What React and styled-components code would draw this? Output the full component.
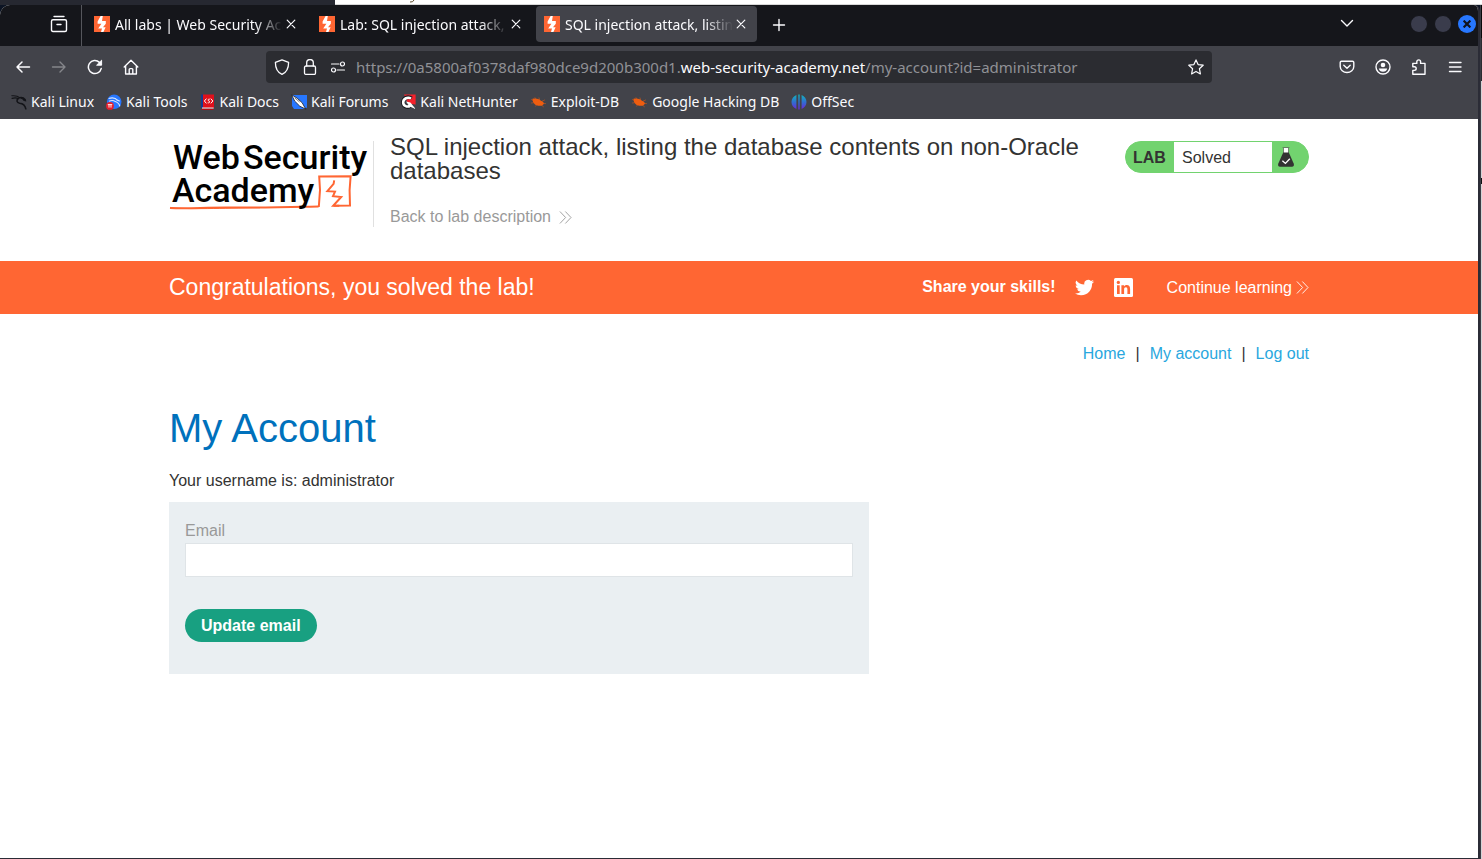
import React from "react";
import styled, { createGlobalStyle, css } from "styled-components";

const GlobalStyle = createGlobalStyle`
  *, *::before, *::after { box-sizing: border-box; }
  html, body, #root { margin: 0; min-height: 100vh; }
  body { background: #2b2c36; color: #333332; font-family: "Liberation Sans", Arial, sans-serif; font-size: 16px; }
  button, input { font: inherit; }
  a { text-decoration: none; }
  h1, h2, p { margin: 0; font-weight: 400; }
`;

/* ---------- desktop behind the browser window ---------- */

const Desktop = styled.div`
  min-height: 100vh;
  display: flex;
  flex-direction: column;
  background: #0c1424;
`;

const BackStrip = styled.div`
  display: flex;
  height: 5px;
  flex: none;
  background: #262831;
`;

const BackPage = styled.div`
  flex: 1;
  margin-left: 335px;
  background: #ffffff;
  border-bottom: 1px solid #d8d8d8;
  padding-left: 74px;
  svg { display: block; }
`;

const DesktopRow = styled.div`
  flex: 1;
  display: flex;
`;

const Frame = styled.div`
  flex: 1;
  min-width: 0;
  display: flex;
  flex-direction: column;
  border-right: 2px solid #2b2c36;
  border-bottom: 1px solid #2b2c36;
  border-radius: 10px 6px 0 0;
  background: #ffffff;
  overflow: hidden;
`;

const BackEdge = styled.div`
  width: 2px;
  flex: none;
  border-left: 1px solid #3b3c44;
  background: linear-gradient(#0a0a0a 33px, #2c2c30 33px, #2c2c30 76px, #d4d4d6 76px, #d4d4d6 173px, #111 173px, #111 179px, #d4d4d6 179px);
`;

/* ---------- browser chrome ---------- */

const Chrome = styled.div`
  font-family: "Noto Sans", sans-serif;
  color: #fbfbfe;
`;

const TabBar = styled.div`
  display: flex;
  align-items: stretch;
  height: 41px;
  background: #15161b;
`;

const Overview = styled.div`
  width: 82px;
  padding: 9px 12px 0 0;
  display: flex;
  justify-content: flex-end;
  align-items: flex-start;
  border-right: 1px solid #55565c;
  margin-right: 2px;
`;

const TabItem = styled.div`
  width: 221px;
  height: 36px;
  margin: 1px 2px 0;
  padding: 0 8px;
  display: flex;
  align-items: center;
  border-radius: 4px;
  background: ${(p) => (p.$active ? "#42434a" : "transparent")};
`;

const TabTitle = styled.span`
  flex: 1;
  min-width: 0;
  margin-left: 5px;
  overflow: hidden;
  white-space: nowrap;
  font-size: 14px;
  line-height: 20px;
  padding-top: 2px;
  mask-image: linear-gradient(to left, transparent, black 28px);
`;

const IconButton = styled.button`
  display: flex;
  align-items: center;
  justify-content: center;
  flex: none;
  width: ${(p) => p.$size || 36}px;
  height: ${(p) => p.$size || 36}px;
  padding: 0;
  border: 0;
  background: none;
  color: ${(p) => (p.$dim ? "#85868b" : "#fbfbfe")};
`;

const Spacer = styled.div`
  flex: 1;
`;

const WindowControls = styled.div`
  display: flex;
  align-items: center;
  gap: 6px;
  margin: 0 2px 3px 45px;
`;

const WindowButton = styled.button`
  display: flex;
  align-items: center;
  justify-content: center;
  width: 18px;
  height: 18px;
  padding: 0;
  border: 0;
  border-radius: 50%;
  background: ${(p) => (p.$close ? "#2777ff" : "#3a3c4c")};
  ${(p) =>
    !p.$close &&
    css`
      border: 1px solid #15161b;
    `}
`;

const NavBar = styled.div`
  display: grid;
  grid-template-columns: minmax(0, 1fr) 64% minmax(0, 1fr);
  align-items: center;
  height: 42px;
  padding: 0;
  background: #42434a;
`;

const NavGroup = styled.div`
  display: flex;
  align-items: center;
  padding: 0 5px;
  justify-content: ${(p) => (p.$end ? "flex-end" : "flex-start")};
`;

const UrlBox = styled.div`
  display: flex;
  align-items: center;
  height: 32px;
  padding: 0 2px;
  border-radius: 4px;
  background: #2b2c31;
`;

const Url = styled.span`
  flex: 1;
  min-width: 0;
  margin-left: 4px;
  overflow: hidden;
  white-space: nowrap;
  font-size: 15px;
  line-height: 24px;
  color: #909196;
  b { font-weight: 400; color: #fbfbfe; }
`;

const Bookmarks = styled.div`
  display: flex;
  align-items: flex-start;
  gap: 12px;
  height: 31px;
  padding: 4px 11px 0;
  background: #42434a;
`;

const Bookmark = styled.a`
  display: flex;
  align-items: center;
  gap: 4px;
  color: #fbfbfe;
  font-size: 14px;
  line-height: 20px;
  white-space: nowrap;
`;

/* ---------- lab page ---------- */

const Container = styled.div`
  width: 100%;
  max-width: 1140px;
  margin: 0 auto;
`;

const LabHeader = styled(Container)`
  display: flex;
  align-items: flex-start;
  gap: 16px;
  min-height: 142px;
  padding-top: 16px;
`;

const LogoLink = styled.a`
  flex: none;
  width: 205px;
  height: 86px;
  margin-top: 6px;
  border-right: 1px solid #e0e0e0;
  svg { display: block; }
`;

const TitleBlock = styled.div`
  flex: 1;
  min-width: 0;
`;

const LabTitle = styled.h2`
  font-size: 24px;
  line-height: 24px;
`;

const BackLink = styled.a`
  display: flex;
  align-items: center;
  gap: 8px;
  margin-top: 22px;
  color: #999999;
  line-height: 24px;
`;

const Status = styled.div`
  display: flex;
  flex: none;
  width: 184px;
  height: 32px;
  margin-top: 6px;
  border: 1px solid #72d36f;
  border-radius: 16px;
  background: #72d36f;
  overflow: hidden;
  line-height: 32px;
`;

const StatusTag = styled.span`
  width: 48px;
  padding-left: 7px;
  font-weight: 700;
`;

const StatusText = styled.span`
  flex: 1;
  padding-left: 8px;
  background: #ffffff;
`;

const StatusIcon = styled.span`
  width: 36px;
  padding: 4px 5px;
  svg { display: block; }
`;

const Banner = styled.section`
  background: #ff6633;
  color: #ffffff;
`;

const BannerRow = styled(Container)`
  display: flex;
  align-items: center;
  height: 53px;
`;

const BannerText = styled.p`
  flex: 1;
  padding-bottom: 2px;
  font-size: 23px;
  line-height: 28px;
`;

const ShareLabel = styled.strong`
  margin-right: 19px;
  padding-bottom: 2px;
`;

const ShareLink = styled.a`
  display: flex;
  margin-right: 20px;
`;

const ContinueLink = styled.a`
  display: flex;
  align-items: center;
  gap: 4px;
  margin-left: 14px;
  color: #ffffff;
`;

const TopLinks = styled.nav`
  display: flex;
  justify-content: flex-end;
  gap: 10px;
  padding-top: 28px;
  line-height: 24px;
  a { color: #29a7de; }
`;

const PageTitle = styled.h1`
  margin-top: 38px;
  color: #0071bc;
  font-size: 40px;
  line-height: 48px;
`;

const Username = styled.p`
  margin-top: 17px;
  line-height: 24px;
`;

const EmailForm = styled.form`
  max-width: 700px;
  margin-top: 9px;
  padding: 16px 16px 32px;
  background: #eaeff2;
`;

const FieldLabel = styled.label`
  display: block;
  color: #999999;
  line-height: 25px;
`;

const TextField = styled.input`
  display: block;
  width: 100%;
  height: 34px;
  padding: 0 8px;
  border: 1px solid #dfe4e7;
  border-radius: 0;
  background: #ffffff;
  outline: 0;
`;

const SubmitButton = styled.button`
  display: block;
  height: 33px;
  margin-top: 32px;
  padding: 0 16px;
  border: 0;
  border-radius: 17px;
  background: #18a081;
  color: #ffffff;
  font-weight: 700;
`;

/* ---------- drawings ---------- */

const Icon = ({ size = 18, sw = 1.4, children }) => (
  <svg width={size} height={size} viewBox={`0 0 ${size} ${size}`} fill="none" stroke="currentColor" strokeWidth={sw} strokeLinecap="round" strokeLinejoin="round" aria-hidden="true">
    {children}
  </svg>
);

const Favicon = () => (
  <svg width="16" height="16" viewBox="0 0 16 16" aria-hidden="true">
    <path fill="#ff6633" d="M0 0h16v16H0z" />
    <path fill="#fff" d="M6.6 0h2.2L8 5h3.8v2.800L9 11.200h2.600L9.400 16H7l1-3.600H4.200l3.200-4.600H3.600V5.400z" />
  </svg>
);

const CloseIcon = () => (
  <Icon size={16} sw={1.2}><path d="M4.2 4.2l7.6 7.6M11.8 4.2l-7.6 7.6" /></Icon>
);

const Chevrons = () => (
  <Icon size={13} sw={0.9}><path d="M1.2.8L6.6 6.5 1.2 12.2M6.6.8L12 6.5 6.6 12.2" /></Icon>
);

const DragonIcon = () => (
  <svg width="16" height="16" viewBox="0 0 16 16" fill="none" stroke="#131418" strokeLinecap="round" aria-hidden="true">
    <path strokeWidth="1.1" d="M.8 1.800c3.600-.4 6 .2 8 1.800M1 4.400c2.600-.8 4.600-.6 6.400.2" />
    <path strokeWidth="1.600" d="M8.600 3.800c2.600-.6 4.200.2 5.600 2M7.400 4.400c-2.400 2-1.600 4.400 1.200 4.800 3 .2 5.400 1.400 6.200 5.600" />
    <path strokeWidth="1" d="M10.500 4.500l4.600 2.400-2.400-.4" />
  </svg>
);

const ToolsIcon = () => (
  <svg width="16" height="16" viewBox="0 0 16 16" aria-hidden="true">
    <circle cx="8.200" cy="7.800" r="7.300" fill="#2777ff" />
    <path d="M2.600 4.600c4-1.400 7.400-.2 9 2M3 7.200c3-1.200 5-.6 6.400.4 2.400 1 4 2.400 4.400 4.800M9.800 5.200l4 2" fill="none" stroke="#d7e6ff" strokeWidth="1.100" />
    <circle cx="4" cy="11.900" r="3.900" fill="#e5202e" />
    <path d="M1.800 10.600h4.400M3 10.600v3M5 10.600v3" stroke="#fff" strokeWidth=".9" />
  </svg>
);

const DocsIcon = () => (
  <svg width="16" height="16" viewBox="0 0 16 16" aria-hidden="true">
    <path fill="#173a8f" d="M1 .500h2V14H1z" />
    <path fill="#e0101b" d="M3 .500h11V14H3z" />
    <path fill="#e9e9ee" d="M2 13.600h11.600v1.200H2z" />
    <path fill="#b00c14" d="M1.600 14.800h12V16h-12z" />
    <path d="M6.400 4.600L4.400 7l2 2.400M10.800 4.600L12.800 7l-2 2.400M9.800 5.200c-2-.4-2.200 1.400-.9 1.800s1 2.200-1.200 1.800" fill="none" stroke="#fff" strokeWidth="1" />
  </svg>
);

const ForumsIcon = () => (
  <svg width="16" height="16" viewBox="0 0 16 16" aria-hidden="true">
    <path fill="#2777ff" d="M1 1h15v12.500L13.500 15H3l-2-3z" />
    <path fill="#fff" stroke="#1a1b20" strokeWidth=".8" d="M.6.8l5.600 3.400 5 4.600 3.600 6.400-6-3L3.600 7z" />
    <path d="M3.600 3.800l5 4.200" stroke="#1a1b20" strokeWidth=".6" />
  </svg>
);

const NetHunterIcon = () => (
  <svg width="16" height="16" viewBox="0 0 16 16" aria-hidden="true">
    <path fill="#f3222c" d="M4 .600h11.600v10L8 9.400z" />
    <path fill="none" stroke="#1a1b20" strokeWidth="4" d="M11.600 4.400C7.600 1.800 3.200 4 3 8.200c0 4.200 4.600 6 7.400 3.600" />
    <path fill="none" stroke="#fff" strokeWidth="2.600" d="M11 4.600C7.600 2.600 3.400 4.600 3.200 8.200c0 4 4.400 5.400 7 3.400" />
    <path fill="#fff" d="M6 7.400l4.400 1L15.600 15l-6-2.600z" />
    <path fill="#f3222c" d="M7.400 5.400h5l3 5-4.400-2.400z" />
  </svg>
);

const BugIcon = () => (
  <svg width="17" height="16" viewBox="0 0 17 16" aria-hidden="true">
    <path fill="#ee5d10" d="M2.500 4.800c2.600-.8 6.200-.4 8.400 2 1.800.4 3 1.600 3 3l-1.600 1.800c-3 .600-6.400.200-8-1.800C2.900 8.400 2.500 6.400 2.500 4.800z" />
    <path d="M1.500 5.600l3 1.400M5 3.600l1.800 2.400M9 3.800l.9 3M1.500 9l3-.4M5.600 12.200L7 10.400M12.400 7l2.200-1M13 9.400l2.600.2M11.500 11.200l2 1.600" stroke="#ee5d10" strokeWidth=".5" strokeLinecap="round" />
  </svg>
);

const OffSecIcon = () => (
  <svg width="16" height="16" viewBox="0 0 16 16" aria-hidden="true">
    <defs>
      <linearGradient id="offsec" x1="0" y1="0" x2="0" y2="1">
        <stop offset="0" stopColor="#12b5bd" />
        <stop offset=".5" stopColor="#2f6fd0" />
        <stop offset="1" stopColor="#6a28d8" />
      </linearGradient>
    </defs>
    <path fill="url(#offsec)" d="M5.400 1v14C2.400 13.800.500 11.200.500 8S2.400 2.200 5.400 1zM7.300.600h1.400v14.800H7.300zM10.600 1c3 1.200 4.900 3.800 4.900 7s-1.900 5.800-4.900 7z" />
  </svg>
);

const Logo = () => (
  <svg width="204" height="86" viewBox="0 0 204 86" role="img" aria-label="Web Security Academy">
    <path d="M1 67c18 1 34-.6 60-.4 30 .2 60-.6 88.600-1.200" fill="none" stroke="#ff6633" strokeWidth="2" />
    <path d="M1 66.400c20 2.400 50 .6 90 .3" fill="none" stroke="#ff6633" strokeWidth="1" />
    <path d="M149.800 66L151 49l-.8-13.400 31.400-.4-1 14 .4 15.400-16.400.2" fill="none" stroke="#ff6633" strokeWidth="2" />
    <path d="M165.200 39.400l-.6 3.400-6.200 7.400 7.600.4-2 4.600 8.200.8-8 8.800h6" fill="none" stroke="#ff6633" strokeWidth="2" />
    <g fill="#000" fontFamily="Roboto, sans-serif" fontSize="34" fontWeight="500">
      <text x="4" y="28">Web</text>
      <text x="74" y="28">Security</text>
      <text x="3" y="61">Academy</text>
    </g>
  </svg>
);

const Flask = () => (
  <svg width="18" height="22" viewBox="0 0 18 22" aria-hidden="true">
    <path d="M6.600 2v5.400h4.800V2z" fill="#fff" />
    <path d="M5.600 1.500h6.800M6.500 2v5M11.500 2v5" stroke="#5f6f5f" strokeWidth=".8" />
    <path fill="#333332" d="M6.200 6.600h5.600l5 11.200c.5 1.800-.4 3-1.800 3H3c-1.400 0-2.300-1.200-1.800-3z" />
    <path d="M5.400 14.800l3 2.600 4.400-4.600" fill="none" stroke="#fff" strokeWidth="1.300" />
  </svg>
);

const Twitter = () => (
  <svg width="19" height="19" viewBox="0 0 24 24" fill="#fff" aria-hidden="true">
    <path d="M23.950 4.570a10 10 0 0 1-2.820.770 4.960 4.960 0 0 0 2.160-2.720c-.95.550-2 .950-3.130 1.180a4.920 4.920 0 0 0-8.380 4.480A13.900 13.900 0 0 1 1.640 3.160a4.900 4.900 0 0 0 1.520 6.570 4.900 4.900 0 0 1-2.230-.610v.06a4.930 4.930 0 0 0 3.950 4.830 5 5 0 0 1-2.210.080 4.940 4.940 0 0 0 4.600 3.420A9.870 9.870 0 0 1 0 19.540a14 14 0 0 0 7.550 2.210c9.050 0 14-7.500 14-13.980 0-.210 0-.420-.020-.630a9.940 9.940 0 0 0 2.460-2.550z" />
  </svg>
);

const LinkedIn = () => (
  <svg width="19" height="19" viewBox="0 0 19 19" aria-hidden="true">
    <rect width="19" height="19" rx="1.500" fill="#fff" />
    <path fill="#ff6633" d="M3 7.200h2.700V16H3zM7.400 7.200H10v1.200c.6-1 1.500-1.500 2.700-1.500 2.400 0 3.400 1.500 3.400 4.100v5h-2.700v-4.500c0-1.400-.4-2.200-1.500-2.200-1.200 0-1.800.8-1.800 2.200V16H7.400z" />
    <circle cx="4.350" cy="4.400" r="1.600" fill="#ff6633" />
  </svg>
);

/* ---------- composition ---------- */

const tabs = [
  { title: "All labs | Web Security Academy" },
  { title: "Lab: SQL injection attack, listing" },
  { title: "SQL injection attack, listing the", active: true },
];

const bookmarks = [
  ["Kali Linux", DragonIcon],
  ["Kali Tools", ToolsIcon],
  ["Kali Docs", DocsIcon],
  ["Kali Forums", ForumsIcon],
  ["Kali NetHunter", NetHunterIcon],
  ["Exploit-DB", BugIcon],
  ["Google Hacking DB", BugIcon],
  ["OffSec", OffSecIcon],
];

function BrowserChrome() {
  return (
    <Chrome>
      <TabBar>
        <Overview>
          <IconButton $size={20} aria-label="View tabs">
            <Icon size={18}><path d="M4 1.500h10" /><path d="M3 4.700h12q1.500 0 1.500 1.500v8.800q0 1.500-1.500 1.500H3q-1.500 0-1.500-1.500V6.200q0-1.500 1.500-1.500zM7 9.500h4" /></Icon>
          </IconButton>
        </Overview>
        {tabs.map((t) => (
          <TabItem key={t.title} $active={t.active}>
            <Favicon />
            <TabTitle>{t.title}</TabTitle>
            <IconButton $size={16} aria-label="Close tab"><CloseIcon /></IconButton>
          </TabItem>
        ))}
        <IconButton $size={39} aria-label="New tab"><Icon size={14}><path d="M7 1.500v11M1.500 7h11" /></Icon></IconButton>
        <Spacer />
        <IconButton aria-label="List all tabs"><Icon size={14}><path d="M1.500 4.500L7 10l5.500-5.500" /></Icon></IconButton>
        <WindowControls>
          <WindowButton aria-label="Minimize" />
          <WindowButton aria-label="Maximize" />
          <WindowButton $close aria-label="Close">
            <svg width="8" height="8" viewBox="0 0 8 8" stroke="#10131c" strokeWidth="2.200"><path d="M.6.6l6.800 6.800M7.400.6L.6 7.400" /></svg>
          </WindowButton>
        </WindowControls>
      </TabBar>

      <NavBar>
        <NavGroup>
          <IconButton aria-label="Back"><Icon size={16} sw={1.500}><path d="M14.500 8H2M7 3L2 8l5 5" /></Icon></IconButton>
          <IconButton $dim aria-label="Forward"><Icon size={16}><path d="M1.500 8H14M9 3l5 5-5 5" /></Icon></IconButton>
          <IconButton aria-label="Reload">
            <Icon size={16} sw={1.500}><path d="M14.200 9.600A6.500 6.500 0 1 1 12.400 3.400" /><path d="M14.600 1.600v4.600H10z" fill="currentColor" strokeWidth="1" /></Icon>
          </IconButton>
          <IconButton aria-label="Home">
            <Icon size={16}><path d="M1.200 8L8 1.200 14.800 8M2.600 7v8h10.800V7M6.200 14.800v-4.400q0-.8.800-.8h2q.8 0 .8.800v4.400" /></Icon>
          </IconButton>
        </NavGroup>
        <UrlBox>
          <IconButton $size={28} aria-label="Tracking protection"><Icon size={16} sw={1.300}><path d="M8 .8l6.600 2.600c0 6-1.600 9.600-6.600 12-5-2.400-6.600-6-6.600-12z" /></Icon></IconButton>
          <IconButton $size={28} aria-label="Site information"><Icon size={16} sw={1.300}><rect x="2.500" y="7" width="11" height="8.400" rx="1.500" /><path d="M4.700 7V3.800a3.300 3.300 0 0 1 6.600 0V7" /></Icon></IconButton>
          <IconButton $size={28} aria-label="Permissions"><Icon size={16} sw={1.200}><path d="M1.500 5h7.500M7 11h7.500" /><circle cx="12.500" cy="5" r="2" /><circle cx="3.500" cy="11" r="2" /></Icon></IconButton>
          <Url>https://0a5800af0378daf980dce9d200b300d1.<b>web-security-academy.net</b>/my-account?id=administrator</Url>
          <IconButton $size={28} aria-label="Bookmark this page"><Icon size={16} sw={1.200}><path d="M8 .9l2.100 4.700 5.100.6-3.800 3.500 1 5.200L8 12.400l-4.400 2.500 1-5.200L.8 6.200l5.100-.6z" /></Icon></IconButton>
        </UrlBox>
        <NavGroup $end>
          <IconButton aria-label="Save to Pocket"><Icon size={16}><path d="M2.500 2.300h11q1.300 0 1.300 1.300V7.500a6.800 6 0 0 1-13.600 0V3.600q0-1.300 1.300-1.300zM4.800 6.200L8 9.200l3.200-3" /></Icon></IconButton>
          <IconButton aria-label="Account"><Icon size={16}><circle cx="8" cy="8" r="7" /><circle cx="8" cy="6" r="2.300" fill="currentColor" stroke="none" /><path d="M3.800 9.600h8.400q-.8 3.200-4.200 3.200T3.800 9.600z" fill="currentColor" stroke="none" /></Icon></IconButton>
          <IconButton aria-label="Extensions"><Icon size={16}><path d="M1.800 15.200v-3.800h1.600a1.800 1.800 0 0 0 0-3.600H1.800V4.400h4V2.800a1.900 1.900 0 0 1 3.800 0v1.600H14v10.800z" /></Icon></IconButton>
          <IconButton aria-label="Menu"><Icon size={16}><path d="M2.500 3.500h11.500M2.500 8h11.500M2.500 12.500h11.500" /></Icon></IconButton>
        </NavGroup>
      </NavBar>

      <Bookmarks>
        {bookmarks.map(([label, Mark]) => (
          <Bookmark href="#" key={label}><Mark />{label}</Bookmark>
        ))}
      </Bookmarks>
    </Chrome>
  );
}

function LabPage() {
  return (
    <main>
      <LabHeader as="header">
        <LogoLink href="#"><Logo /></LogoLink>
        <TitleBlock>
          <LabTitle>SQL injection attack, listing the database contents on non-Oracle databases</LabTitle>
          <BackLink href="#">Back to lab description <Chevrons /></BackLink>
        </TitleBlock>
        <Status>
          <StatusTag>LAB</StatusTag>
          <StatusText>Solved</StatusText>
          <StatusIcon><Flask /></StatusIcon>
        </Status>
      </LabHeader>

      <Banner>
        <BannerRow>
          <BannerText>Congratulations, you solved the lab!</BannerText>
          <ShareLabel>Share your skills!</ShareLabel>
          <ShareLink href="#" aria-label="Share on Twitter"><Twitter /></ShareLink>
          <ShareLink href="#" aria-label="Share on LinkedIn"><LinkedIn /></ShareLink>
          <ContinueLink href="#">Continue learning <Chevrons /></ContinueLink>
        </BannerRow>
      </Banner>

      <Container>
        <TopLinks>
          <a href="#">Home</a><span>|</span><a href="#">My account</a><span>|</span><a href="#">Log out</a>
        </TopLinks>
        <PageTitle>My Account</PageTitle>
        <Username>Your username is: administrator</Username>
        <EmailForm onSubmit={(e) => e.preventDefault()}>
          <FieldLabel htmlFor="email">Email</FieldLabel>
          <TextField id="email" type="email" />
          <SubmitButton type="submit">Update email</SubmitButton>
        </EmailForm>
      </Container>
    </main>
  );
}

export default function App() {
  return (
    <Desktop>
      <GlobalStyle />
      <BackStrip>
        <BackPage>
          <svg width="6" height="3" viewBox="0 0 6 3" fill="none" stroke="#5a4a2a" aria-hidden="true"><path d="M5 0Q4 2.500 1 2" /></svg>
        </BackPage>
      </BackStrip>
      <DesktopRow>
        <Frame>
          <BrowserChrome />
          <LabPage />
        </Frame>
        <BackEdge />
      </DesktopRow>
    </Desktop>
  );
}
